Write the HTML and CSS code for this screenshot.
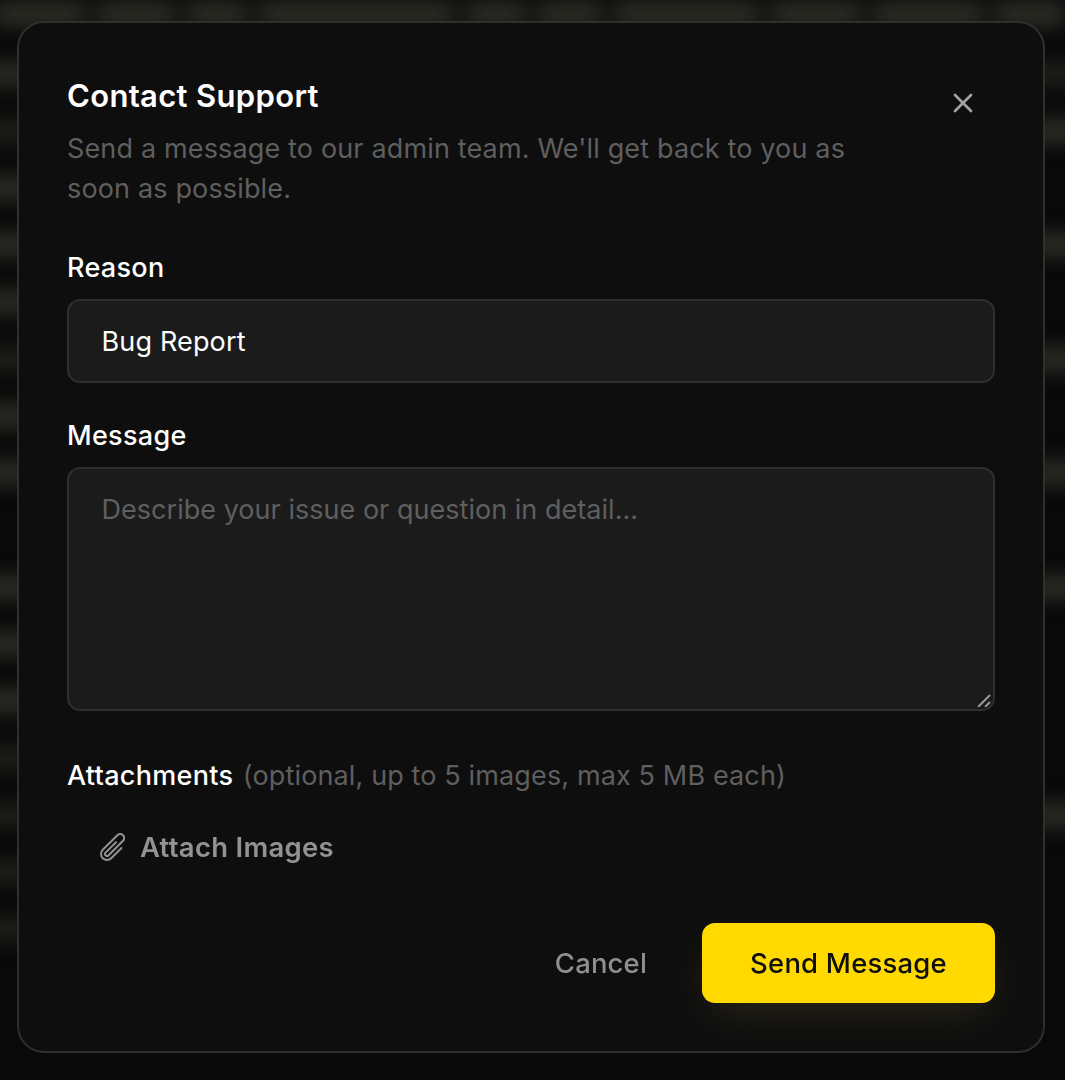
FILE: index.html
```html
<!DOCTYPE html>
<html lang="en">
<head>
  <meta charset="UTF-8">
  <title>Contact Support</title>
  <meta name="viewport" content="width=device-width, initial-scale=1">
  <link rel="stylesheet" href="styles.css">
</head>
<body>
  <!-- Blurred page behind the modal -->
  <div class="backdrop" aria-hidden="true">
    <div class="bg-row bg-row-top">
      <i style="width:90px"></i><i style="width:78px"></i><i style="width:60px"></i><i style="width:195px"></i><i style="width:60px"></i><i style="width:65px"></i><i style="width:145px"></i><i style="width:90px"></i><i style="width:110px"></i><i style="width:70px"></i>
    </div>
    <div class="bg-row"><i></i><i class="dim"></i></div>
    <div class="bg-row"><i class="dim"></i><i></i></div>
    <div class="bg-row"><i></i><i class="off"></i></div>
    <div class="bg-row"><i></i><i></i></div>
    <div class="bg-row"><i></i><i class="off"></i></div>
    <div class="bg-row"><i class="dim"></i><i></i></div>
    <div class="bg-row"><i></i><i class="off"></i></div>
    <div class="bg-row"><i></i><i></i></div>
    <div class="bg-row"><i class="off"></i><i class="off"></i></div>
    <div class="bg-row"><i></i><i></i></div>
    <div class="bg-row"><i></i><i class="off"></i></div>
    <div class="bg-row"><i></i><i class="off"></i></div>
    <div class="bg-row"><i class="dim"></i><i class="off"></i></div>
    <div class="bg-row"><i class="dim"></i><i></i></div>
    <div class="bg-row"><i class="dim"></i><i class="off"></i></div>
    <div class="bg-row"><i class="dim"></i><i class="off"></i></div>
  </div>

  <div class="overlay">
    <form class="modal">
      <div class="modal-head">
        <div class="modal-heading">
          <h2 class="modal-title">Contact Support</h2>
          <p class="modal-desc">Send a message to our admin team. We'll get back to you as soon as possible.</p>
        </div>
        <button type="button" class="close-btn" aria-label="Close">
          <svg viewBox="0 0 24 24" fill="none" stroke="currentColor" stroke-width="2" stroke-linecap="round" stroke-linejoin="round">
            <path d="M18 6 6 18"/>
            <path d="m6 6 12 12"/>
          </svg>
        </button>
      </div>

      <label class="field-label" for="reason">Reason</label>
      <select class="field field-select" id="reason">
        <option>Bug Report</option>
      </select>

      <label class="field-label label-message" for="message">Message</label>
      <div class="area-wrap">
        <textarea class="field field-area" id="message" placeholder="Describe your issue or question in detail..."></textarea>
        <svg class="resize-grip" viewBox="0 0 14 14" fill="none" stroke="#9a9a9a" stroke-width="2">
          <path d="M1 14 13 2"/>
          <path d="M8 14 13 9"/>
        </svg>
      </div>

      <div class="field-label label-attach">Attachments <span class="hint">(optional, up to 5 images, max 5 MB each)</span></div>
      <button type="button" class="attach-btn">
        <svg viewBox="0 0 24 24" fill="none" stroke="currentColor" stroke-width="1.5" stroke-linecap="round" stroke-linejoin="round">
          <path d="m18.375 12.739-7.693 7.693a4.5 4.5 0 0 1-6.364-6.364l10.94-10.94A3 3 0 1 1 19.5 7.372L8.552 18.32m.009-.01-.01.01m5.699-9.941-7.81 7.81a1.5 1.5 0 0 0 2.112 2.13"/>
        </svg>
        Attach Images
      </button>

      <div class="modal-foot">
        <button type="button" class="cancel-btn">Cancel</button>
        <button type="submit" class="send-btn">Send Message</button>
      </div>
    </form>
  </div>
</body>
</html>
```

FILE: styles.css
```css
html, body {
  height: 100%;
  margin: 0;
  padding: 0;
  overflow: hidden;
  background: #090909;
  font-family: Inter, 'Noto Sans', sans-serif;
}
.backdrop {
  position: fixed;
  top: 0; left: 0; right: 0; bottom: 0;
  filter: blur(10px);
  pointer-events: none;
}
.bg-row {
  display: flex;
  justify-content: space-between;
  height: 22px;
  margin: 0 -20px 35px;
}
.bg-row-top {
  height: 24px;
  margin: 2px 0 37px -5px;
}
.bg-row i {
  display: block;
  width: 120px;
  background: #2f2f28;
}
.bg-row i.dim {
  background: #20201c;
}
.bg-row i.off {
  background: none;
}
.overlay {
  position: relative;
  height: 100%;
  box-sizing: border-box;
  padding: 21px 20px 27px 17px;
}
.modal {
  display: flex;
  flex-direction: column;
  height: 100%;
  box-sizing: border-box;
  padding: 51px 48px 48px;
  background: #0e0e0e;
  border: 2px solid #2f2f2b;
  border-radius: 27px;
}
.modal-head {
  display: flex;
  justify-content: space-between;
  align-items: flex-start;
}
.modal-heading {
  max-width: 800px;
}
.modal-title {
  margin: 0 0 11px;
  font-size: 31px;
  line-height: 44px;
  font-weight: 600;
  letter-spacing: 0.33px;
  color: #fff;
}
.modal-desc {
  margin: 0;
  font-size: 27px;
  line-height: 40px;
  letter-spacing: 0.15px;
  color: #5f5f5f;
}
.close-btn {
  width: 24px;
  height: 24px;
  margin: 17px 20px 0 0;
  padding: 0;
  background: none;
  border: none;
  color: #a3a3a3;
  cursor: pointer;
}
.close-btn svg {
  display: block;
  width: 32px;
  height: 32px;
  margin: -4px;
}
.field-label {
  font-size: 27px;
  line-height: 40px;
  font-weight: 450;
  letter-spacing: 0.3px;
  color: #fff;
  margin-top: 39px;
  margin-bottom: 11px;
}
.label-message {
  margin-top: 33px;
}
.label-attach {
  margin-top: 45px;
}
.hint {
  margin-left: 2px;
  font-weight: 400;
  letter-spacing: 0.13px;
  color: #5f5f5f;
}
.field {
  display: block;
  width: 100%;
  box-sizing: border-box;
  padding: 0 32.5px;
  background: #1b1b1b;
  border: 2px solid #2f2f2b;
  border-radius: 13px;
  font-family: inherit;
  font-size: 27px;
  letter-spacing: 0.15px;
  color: #fff;
  outline: none;
}
.field-select {
  height: 84px;
  appearance: none;
  -webkit-appearance: none;
}
.area-wrap {
  position: relative;
}
.field-area {
  height: 244px;
  padding-top: 21px;
  padding-bottom: 19px;
  line-height: 40px;
  letter-spacing: 0.03px;
  resize: none;
}
.field-area::placeholder {
  color: #5f5f5f;
  opacity: 1;
}
.resize-grip {
  position: absolute;
  right: 4px;
  bottom: 4px;
  width: 14px;
  height: 14px;
}
.attach-btn {
  display: flex;
  align-items: center;
  gap: 11px;
  align-self: flex-start;
  height: 80px;
  padding: 0 30px;
  background: none;
  border: none;
  font-family: inherit;
  font-size: 27.5px;
  font-weight: 600;
  letter-spacing: 0.27px;
  color: #929292;
  cursor: pointer;
}
.attach-btn svg {
  width: 32px;
  height: 32px;
  flex-shrink: 0;
}
.modal-foot {
  display: flex;
  justify-content: flex-end;
  align-items: center;
  gap: 7px;
  margin-top: auto;
}
.cancel-btn {
  height: 80px;
  padding: 0 48px;
  background: none;
  border: none;
  font-family: inherit;
  font-size: 27.5px;
  font-weight: 550;
  letter-spacing: 0.15px;
  color: #8f8f8f;
  cursor: pointer;
}
.send-btn {
  width: 293px;
  height: 80px;
  padding: 0;
  background: #ffd900;
  border: none;
  border-radius: 13px;
  font-family: inherit;
  font-size: 27.5px;
  font-weight: 550;
  letter-spacing: 0.2px;
  color: #0f0f0f;
  box-shadow: 0 17px 42px -8px rgba(255, 230, 120, 0.11);
  cursor: pointer;
}
```
